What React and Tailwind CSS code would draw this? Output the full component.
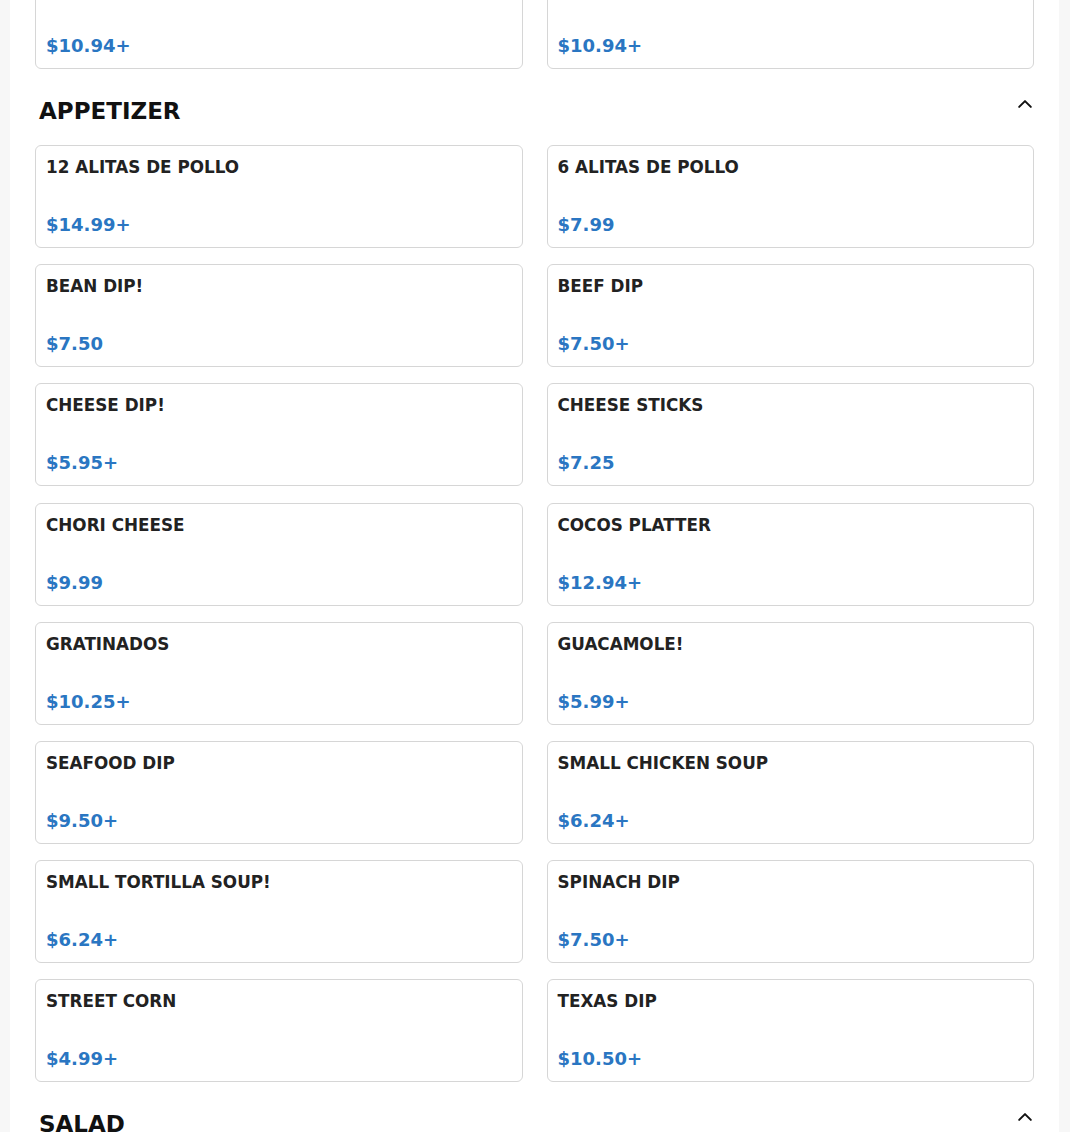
import React from 'react'

const sections = [
  {
    title: 'APPETIZER',
    items: [
      ['12 ALITAS DE POLLO', '$14.99+'],
      ['6 ALITAS DE POLLO', '$7.99'],
      ['BEAN DIP!', '$7.50'],
      ['BEEF DIP', '$7.50+'],
      ['CHEESE DIP!', '$5.95+'],
      ['CHEESE STICKS', '$7.25'],
      ['CHORI CHEESE', '$9.99'],
      ['COCOS PLATTER', '$12.94+'],
      ['GRATINADOS', '$10.25+'],
      ['GUACAMOLE!', '$5.99+'],
      ['SEAFOOD DIP', '$9.50+'],
      ['SMALL CHICKEN SOUP', '$6.24+'],
      ['SMALL TORTILLA SOUP!', '$6.24+'],
      ['SPINACH DIP', '$7.50+'],
      ['STREET CORN', '$4.99+'],
      ['TEXAS DIP', '$10.50+'],
    ],
  },
  {
    title: 'SALAD',
    items: [
      ['CHICKEN SALAD', '$10.99+'],
      ['TACO SALAD', '$10.99+'],
    ],
  },
]

function Chevron() {
  return (
    <svg className="w-[20px] h-[20px] -mt-[3px] -mr-[1px]" viewBox="0 0 24 24" fill="none" stroke="#111" strokeWidth="2.4" strokeLinecap="round" strokeLinejoin="round">
      <path d="M5 15.5l7-7 7 7" />
    </svg>
  )
}

function Card({ name, price }) {
  return (
    <div className="flex flex-col justify-between h-[103px] border border-[#d6d6d6] rounded-[6px] px-[10px] pt-[11px] pb-[12px] bg-white">
      <div className="text-[16.8px] leading-[20px] font-bold text-[#222]">{name}</div>
      <div className="text-[18px] leading-[20px] font-bold text-[#2a76c2]">{price}</div>
    </div>
  )
}

function Section({ title, items }) {
  return (
    <div>
      <div className="flex items-start justify-between pl-[4px] pt-[28px] pb-[20px]">
        <h2 className="text-[23px] leading-[28px] font-bold text-[#111]">{title}</h2>
        <Chevron />
      </div>
      <div className="grid grid-cols-2 gap-x-[24px] gap-y-[16.2px]">
        {items.map(([name, price]) => (
          <Card key={name} name={name} price={price} />
        ))}
      </div>
    </div>
  )
}

export default function App() {
  return (
    <div className="bg-[#f7f7f7] h-[1132px] overflow-hidden" style={{ fontFamily: '"DejaVu Sans", sans-serif' }}>
      <div className="ml-[10px] mr-[11px] bg-white px-[25px] min-h-full">
        <div className="-mt-[34px] grid grid-cols-2 gap-x-[24px]">
          <Card name="" price="$10.94+" />
          <Card name="" price="$10.94+" />
        </div>
        {sections.map((s) => (
          <Section key={s.title} title={s.title} items={s.items} />
        ))}
      </div>
    </div>
  )
}
